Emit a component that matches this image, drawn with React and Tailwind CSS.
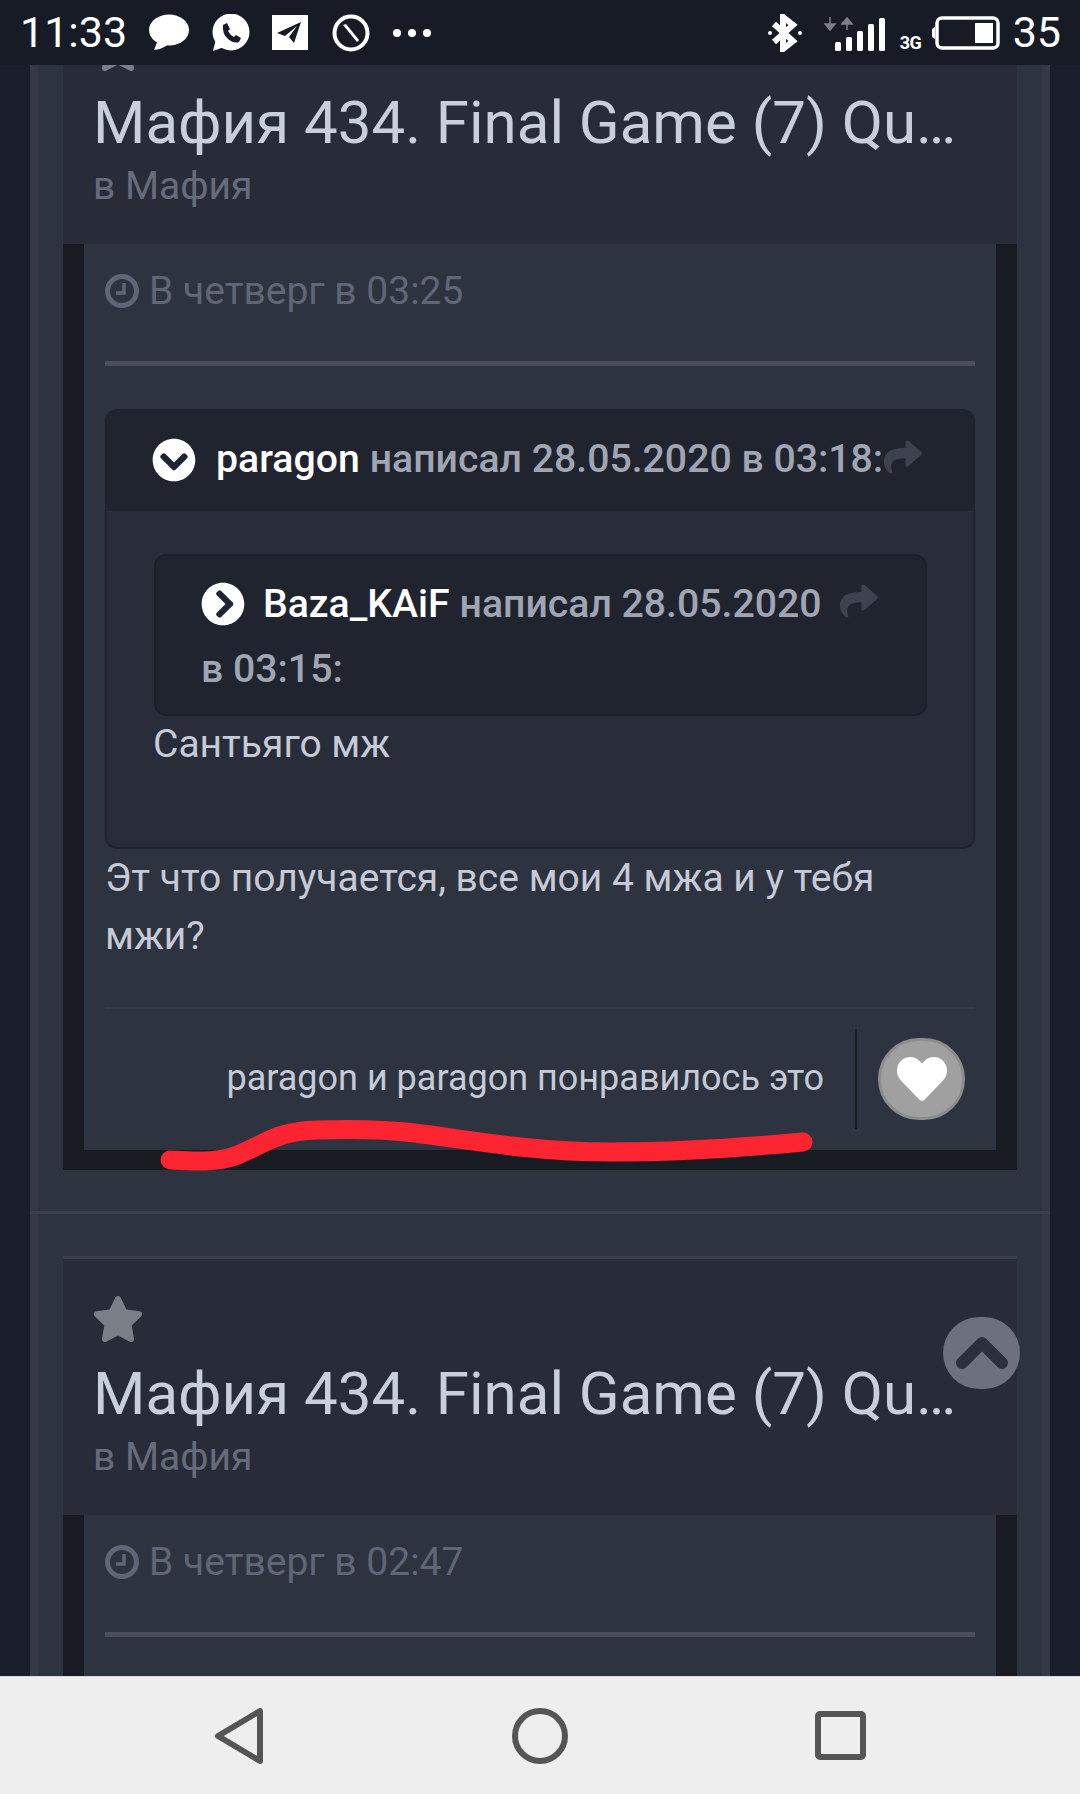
import React from "react";
import { FaStar, FaShare, FaChevronCircleDown, FaChevronCircleRight, FaHeart } from "react-icons/fa";

function StatusBar() {
  return (
    <div className="h-[65px] shrink-0 bg-[#171b26] flex items-center justify-between pl-[20px] pr-[19px] text-white">
      <div className="flex items-center">
        <span className="text-[43px] leading-none w-[129px]">11:33</span>
        <svg width="40" height="37" viewBox="0 0 40 37" className="mr-[22px]" fill="white">
          <ellipse cx="20" cy="16" rx="20" ry="15.5" />
          <path d="M9 26 L5 36 Q15 35 20 29Z" />
        </svg>
        <svg width="39" height="37" viewBox="0 0 39 37" className="mr-[22px]">
          <circle cx="20" cy="18" r="18.5" fill="white" />
          <path d="M2 37 L5 25 L13 33Z" fill="white" />
          <path d="M12 11 L16 9 L19 15 L17 17 Q19 21 23 23 L25 21 L30 24 L28 28 Q23 30 17 25 Q11 20 12 11Z" fill="#171b26" />
        </svg>
        <svg width="36" height="35" viewBox="0 0 36 35" className="mr-[24px]">
          <rect width="36" height="35" fill="white" />
          <path d="M5 18 L29 7 L22 28 L17 22 L25 11 L13 21Z" fill="#171b26" />
        </svg>
        <svg width="38" height="38" viewBox="0 0 38 38" className="mr-[22px]">
          <circle cx="19" cy="19" r="16.5" fill="none" stroke="white" strokeWidth="4" />
          <path d="M11 11 L14 10 L27 26 L25 28Z" fill="white" />
        </svg>
        <svg width="40" height="10" viewBox="0 0 40 10" fill="white">
          <circle cx="5" cy="5" r="4" />
          <circle cx="20" cy="5" r="4" />
          <circle cx="35" cy="5" r="4" />
        </svg>
      </div>
      <div className="flex items-center">
        <svg width="34" height="38" viewBox="0 0 34 38" className="mr-[22px]">
          <path d="M6 10 L25 27 L15 35 L15 3 L25 11 L6 28" fill="none" stroke="white" strokeWidth="6" />
          <circle cx="2" cy="19" r="2" fill="white" />
          <circle cx="32" cy="19" r="2" fill="white" />
        </svg>
        <svg width="66" height="36" viewBox="0 0 66 36" className="mr-[10px]">
          <path d="M6 9 h-5 l5 6 l5 -6 h-5z M6 2 v8" fill="#7d7f85" stroke="#7d7f85" strokeWidth="1.5" />
          <path d="M23 3 l-5 6 h10z M23 8 v7" fill="#7d7f85" stroke="#7d7f85" strokeWidth="1.5" />
          <rect x="11" y="27" width="6" height="9" rx="1.5" fill="white" />
          <rect x="22" y="22" width="6" height="14" rx="1.5" fill="white" />
          <rect x="33" y="16" width="6" height="20" rx="1.5" fill="white" />
          <rect x="44" y="9" width="6" height="27" rx="1.5" fill="white" />
          <rect x="55" y="3" width="6" height="33" rx="1.5" fill="white" />
        </svg>
        <span className="text-[18px] leading-none font-bold mt-[20px] w-[32px] tracking-[-0.5px]">3G</span>
        <svg width="68" height="34" viewBox="0 0 68 34" className="mr-[13px]">
          <rect x="5" y="2" width="61" height="30" rx="5" fill="none" stroke="white" strokeWidth="3.5" />
          <path d="M3 11 v12 q-3 -1 -3 -3 v-6 q0 -2 3 -3z" fill="white" />
          <rect x="43" y="7" width="18" height="20" fill="white" />
        </svg>
        <span className="text-[43px] leading-none">35</span>
      </div>
    </div>
  );
}

function Clock() {
  return (
    <svg width="34" height="34" viewBox="0 0 34 34" fill="none" stroke="currentColor">
      <circle cx="17" cy="17" r="14.5" strokeWidth="5" />
      <path d="M19 9 V19 H11" strokeWidth="3.5" />
    </svg>
  );
}

function Card({ time, children }) {
  return (
    <div className="mx-[25px]">
      <div className="bg-[#272c38] border-t-[3px] border-[#393e4b] h-[259px] pl-[30px] pr-[31px] pt-[35px]">
        <FaStar className="w-[52px] h-[50px] -ml-[1px] text-[#7a7e87]" />
        <div className="mt-[15px] text-[60px] leading-[70px] text-[#c9cedb] whitespace-nowrap">
          Мафия 434. Final Game (7) Qu…
        </div>
        <div className="text-[39px] leading-[56px] text-[#666c7b]">в Мафия</div>
      </div>
      <div className="bg-[#191b22] px-[21px] pb-[20px]">
        <div className="bg-[#2e3340] px-[21px]">
          <div className="h-[117px] pt-[25px] flex items-start">
            <span className="h-[44px] flex items-center gap-[10px] text-[39px] leading-none text-[#5f6675]">
              <Clock />
              {time}
            </span>
          </div>
          <div className="h-[5px] bg-[#4a4e5b]" />
          {children}
        </div>
      </div>
    </div>
  );
}

function Post() {
  return (
    <>
      <div className="mt-[43px] rounded-[12px] border-2 border-[#1f2330] bg-[#292d39] h-[440px] overflow-hidden">
        <div className="h-[100px] bg-[#20242f] flex items-center pl-[45px] pb-[2px] text-[39.2px] leading-none">
          <FaChevronCircleDown className="w-[44px] h-[44px] text-white shrink-0" />
          <span className="ml-[20px] font-medium text-white">paragon</span>
          <span className="ml-[10px] font-medium text-[#a0a5b3]">написал 28.05.2020 в 03:18:</span>
          <FaShare className="w-[40px] h-[38px] text-[#3e424e] -mt-[6px] shrink-0" />
        </div>
        <div className="px-[46px] pt-[43px]">
          <div className="h-[162px] ml-[1px] rounded-[12px] border-2 border-[#1c202a] bg-[#20242f] pl-[45px] pr-[40px] text-[39.2px] font-medium leading-[65px]">
            <div className="flex items-center h-[88px] pt-[8px]">
              <FaChevronCircleRight className="w-[44px] h-[44px] text-white shrink-0" />
              <span className="ml-[18px] text-white">Baza_KAiF</span>
              <span className="ml-[10px] text-[#a0a5b3]">написал 28.05.2020</span>
              <FaShare className="ml-[17px] w-[40px] h-[38px] text-[#3e424e] -mt-[6px] shrink-0" />
            </div>
            <div className="text-[#a0a5b3] -mt-[7px]">в 03:15:</div>
          </div>
          <div className="mt-[-2px] text-[39px] leading-[58px] text-[#c5cad6] pt-[1px]">Сантьяго мж</div>
        </div>
      </div>
      <div className="text-[39px] leading-[58px] text-[#c5cad6] pr-[60px]">
        Эт что получается, все мои 4 мжа и у тебя мжи?
      </div>
      <div className="h-[2px] bg-[#383c49] mt-[42px]" />
      <div className="h-[141px] pb-[2px] flex items-center justify-end">
        <span className="text-[36px] leading-none text-[#c5cad6] -mt-[1px] whitespace-nowrap">paragon и paragon понравилось это</span>
        <div className="w-[2px] h-[100px] bg-[#191b22] ml-[31px] shrink-0" />
        <div className="ml-[21px] mr-[10px] w-[87px] h-[82px] rounded-full bg-[#a0a0a0] border-[3px] border-[#8d8d8d] flex items-center justify-center shrink-0">
          <FaHeart className="w-[58px] h-[50px] text-white" />
        </div>
      </div>
    </>
  );
}

export default function App() {
  return (
    <div className="relative w-[1080px] h-[1794px] flex flex-col overflow-hidden bg-[#1a1f2b] font-['Roboto',sans-serif]">
      <StatusBar />
      <div className="flex-1 min-h-0 overflow-hidden">
        <div className="mx-[30px] bg-[#2e3340] border-x-[8px] border-[#353945] -mt-[80px] h-[1800px]">
          <Card time="В четверг в 03:25">
            <Post />
          </Card>
          <div className="mt-[41px] -mx-[8px] h-[3px] bg-[#3b404d]" />
          <div className="mt-[42px]">
            <Card time="В четверг в 02:47">
              <div className="h-[200px]" />
            </Card>
          </div>
        </div>
      </div>
      <div className="h-[118px] shrink-0 bg-[#eeeeee] border-t border-[#d8d8d8] flex items-center justify-center">
        <svg width="700" height="60" viewBox="0 0 700 60" fill="none" stroke="#555555" strokeWidth="6" strokeLinejoin="round">
          <path d="M70 5 L70 55 L28 30Z" />
          <ellipse cx="350" cy="30" rx="25" ry="25" />
          <rect x="628" y="8" width="45" height="43" rx="2" />
        </svg>
      </div>
      <svg className="absolute left-0 top-0 pointer-events-none" width="1080" height="1794" fill="none">
        <path d="M170 1160 C190 1161 215 1163 235 1156 C262 1146 275 1131 317 1130 C350 1129 390 1130 415 1133 C470 1140 530 1152 611 1152 C680 1152 750 1147 803 1142" stroke="#fb2430" strokeWidth="19" strokeLinecap="round" />
      </svg>
      <div className="absolute left-[943px] top-[1317px] w-[77px] h-[72px] rounded-full bg-[#6d717d] flex items-center justify-center">
        <svg width="56" height="40" viewBox="0 0 56 40" fill="none" stroke="#2c303d" strokeWidth="12" strokeLinejoin="round" strokeLinecap="round">
          <path d="M8 30 L28 10 L48 30" />
        </svg>
      </div>
    </div>
  );
}
